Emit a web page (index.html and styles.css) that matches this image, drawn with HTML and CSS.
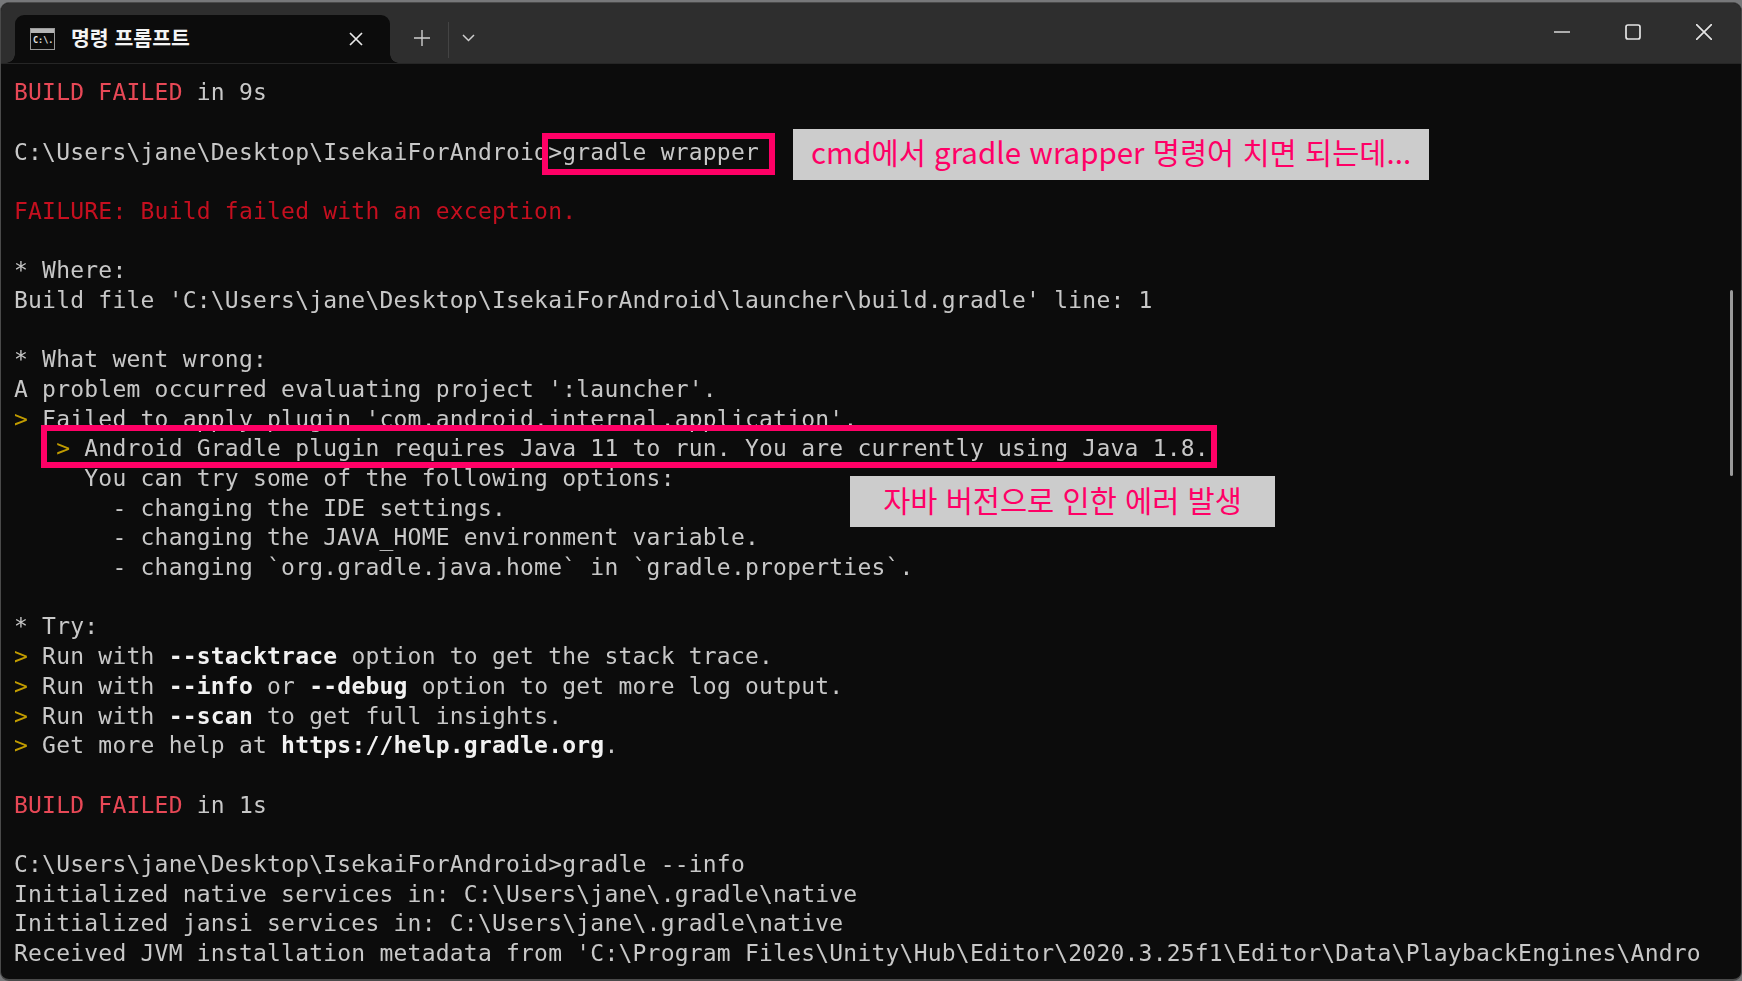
FILE: index.html
```html
<!DOCTYPE html>
<html lang="ko">
<head>
<meta charset="utf-8">
<title>명령 프롬프트</title>
<link rel="stylesheet" href="styles.css">
</head>
<body>
<div class="window">
  <header class="titlebar">
    <div class="tab">
      <svg class="tab-icon" width="25" height="22" viewBox="0 0 25 22"><rect x="0.5" y="0.5" width="24" height="21" fill="#0c0c0c" stroke="#9a9a9a"/><rect x="1" y="1" width="23" height="4" fill="#b5b5b5"/><text x="3" y="15" class="icon-text">C:\.</text></svg>
      <span class="tab-title">명령 프롬프트</span>
      <svg class="tab-close" width="16" height="16" viewBox="0 0 16 16"><path d="M2 2L14 14M14 2L2 14" stroke="#e8e8e8" stroke-width="1.7" fill="none"/></svg>
    </div>
    <svg class="new-tab" width="16" height="16" viewBox="0 0 16 16"><path d="M8 0V16M0 8H16" stroke="#cfcfcf" stroke-width="1.4" fill="none"/></svg>
    <span class="divider"></span>
    <svg class="chevron" width="13" height="8" viewBox="0 0 13 8"><path d="M1 1L6.500 6.500L12 1" stroke="#cfcfcf" stroke-width="1.5" fill="none"/></svg>
    <div class="controls">
      <svg width="16" height="16" viewBox="0 0 16 16"><path d="M0 8H16" stroke="#d8d8d8" stroke-width="1.7"/></svg>
      <svg width="16" height="16" viewBox="0 0 16 16"><rect x="1" y="1" width="14" height="14" rx="2" stroke="#e4e4e4" stroke-width="1.7" fill="none"/></svg>
      <svg width="16" height="16" viewBox="0 0 16 16"><path d="M0 0L16 16M16 0L0 16" stroke="#e4e4e4" stroke-width="1.7" fill="none"/></svg>
    </div>
  </header>
  <main class="terminal">
<pre class="output"><span class="red">BUILD FAILED</span> in 9s

C:\Users\jane\Desktop\IsekaiForAndroid&gt;gradle wrapper

<span class="dark-red">FAILURE: Build failed with an exception.</span>

* Where:
Build file 'C:\Users\jane\Desktop\IsekaiForAndroid\launcher\build.gradle' line: 1

* What went wrong:
A problem occurred evaluating project ':launcher'.
<span class="yellow">&gt;</span> Failed to apply plugin 'com.android.internal.application'.
   <span class="yellow">&gt;</span> Android Gradle plugin requires Java 11 to run. You are currently using Java 1.8.
     You can try some of the following options:
       - changing the IDE settings.
       - changing the JAVA_HOME environment variable.
       - changing `org.gradle.java.home` in `gradle.properties`.

* Try:
<span class="yellow">&gt;</span> Run with <b>--stacktrace</b> option to get the stack trace.
<span class="yellow">&gt;</span> Run with <b>--info</b> or <b>--debug</b> option to get more log output.
<span class="yellow">&gt;</span> Run with <b>--scan</b> to get full insights.
<span class="yellow">&gt;</span> Get more help at <b>https://help.gradle.org</b>.

<span class="red">BUILD FAILED</span> in 1s

C:\Users\jane\Desktop\IsekaiForAndroid&gt;gradle --info
Initialized native services in: C:\Users\jane\.gradle\native
Initialized jansi services in: C:\Users\jane\.gradle\native
Received JVM installation metadata from 'C:\Program Files\Unity\Hub\Editor\2020.3.25f1\Editor\Data\PlaybackEngines\Andro</pre>
    <span class="scrollbar"></span>
  </main>
  <div class="box box-cmd"></div>
  <div class="box box-err"></div>
  <div class="note note-cmd">cmd에서 gradle wrapper 명령어 치면 되는데...</div>
  <div class="note note-err">자바 버전으로 인한 에러 발생</div>
</div>
</body>
</html>
```
FILE: styles.css
```css
* { box-sizing: border-box; }
html, body { margin: 0; height: 100%; overflow: hidden; background: #77787a; }
.window {
  position: relative;
  height: 979px;
  margin-top: 2px;
  display: flex;
  flex-direction: column;
  background: #0c0c0c;
  border: 1px solid #4a4a4a;
  border-bottom-width: 2px;
  border-radius: 9px;
  overflow: hidden;
}
.titlebar {
  flex: none;
  height: 60px;
  background: #2e2e2e;
  display: flex;
  align-items: flex-end;
  position: relative;
  padding-left: 14px;
}
.tab {
  width: 375px;
  height: 48px;
  background: #0c0c0c;
  border-radius: 9px 9px 0 0;
  display: flex;
  align-items: center;
  padding: 0 0 0 15px;
  position: relative;
}
.tab::before, .tab::after {
  content: "";
  position: absolute;
  bottom: 0;
  width: 9px;
  height: 9px;
}
.tab::before { left: -9px; background: radial-gradient(circle at 0 0, transparent 8.5px, #0c0c0c 9px); }
.tab::after { right: -9px; background: radial-gradient(circle at 100% 0, transparent 8.5px, #0c0c0c 9px); }
.tab-icon { flex: none; margin-right: 16px; }
.icon-text { font: bold 8.5px "DejaVu Sans Mono", monospace; fill: #e0e0e0; }
.tab-title {
  font: bold 20.5px "Noto Sans CJK KR", sans-serif;
  color: #f4f4f4;
  width: 277px;
  white-space: nowrap;
  position: relative;
  top: -2px;
}
.tab-close { flex: none; }
.new-tab { flex: none; margin: 0 0 17px 24px; }
.divider { flex: none; width: 1px; height: 36px; background: #444; margin: 0 0 5px 18px; }
.chevron { flex: none; margin: 0 0 21px 13px; }
.controls {
  margin-left: auto;
  align-self: flex-start;
  margin-top: 21px;
  margin-right: 29px;
  display: flex;
  gap: 55px;
}
.terminal {
  flex: 1;
  min-height: 0;
  position: relative;
  padding: 14.4px 0 0 13px;
  border-top: 1px solid #262626;
  overflow: hidden;
}
.output {
  margin: 0;
  font-family: "DejaVu Sans Mono", monospace;
  font-size: 23px;
  letter-spacing: 0.21px;
  line-height: 29.67px;
  color: #c8c8c8;
  white-space: pre;
  filter: blur(0.45px);
}
.output b { color: #f2f2f2; font-weight: bold; }
.red { color: #e74856; }
.dark-red { color: #c50f1f; }
.yellow { color: #c19c00; }
.scrollbar {
  position: absolute;
  right: 8px;
  top: 226px;
  width: 3px;
  height: 186px;
  border-radius: 2px;
  background: #9a9a9a;
}
.box { position: absolute; border: 6px solid #ff0066; }
.box-cmd { left: 541px; top: 130px; width: 233px; height: 42px; }
.box-err { left: 40px; top: 422px; width: 1176px; height: 43px; }
.note {
  position: absolute;
  background: #cccccc;
  color: #ff0066;
  font-family: "Noto Sans CJK KR", sans-serif;
  font-size: 29.5px;
  line-height: 40px;
  padding-bottom: 7px;
  display: flex;
  align-items: center;
  justify-content: center;
  white-space: nowrap;
}
.note-cmd { left: 792px; top: 126px; width: 636px; height: 51px; }
.note-err { left: 849px; top: 473px; width: 425px; height: 51px; padding-bottom: 5px; }
```
